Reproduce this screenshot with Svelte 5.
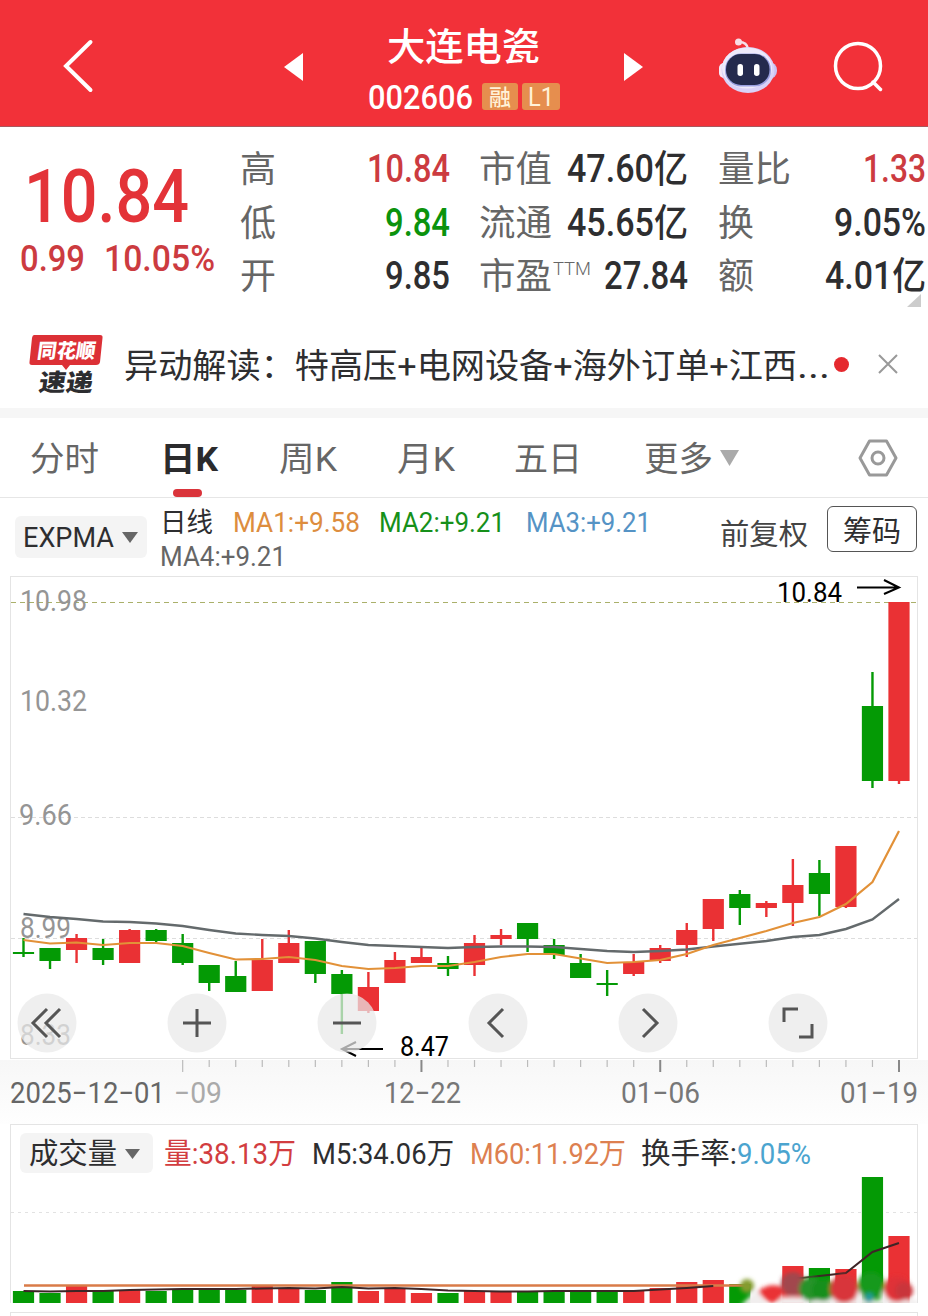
<script>
	const RED = '#ea3134';
	const GREEN = '#049a05';

	const stock = { name: '大连电瓷', code: '002606' };

	const tabs = [
		{ label: '分时', w: 69, gap: 30 },
		{ label: '日K', w: 58, gap: 61, active: true },
		{ label: '周K', w: 58, gap: 61 },
		{ label: '月K', w: 58, gap: 60 },
		{ label: '五日', w: 68, gap: 59 },
		{ label: '更多', w: 69, gap: 62 }
	];

	// [open/close top, bottom, high, low, rising, volume top]
	const days = [
		[952, 954, 938, 957, 0, 1291], [948, 961, 948, 969, 0, 1293], [938, 950, 934, 963, 1, 1286],
		[948, 960, 939, 965, 0, 1290], [930, 963, 929, 963, 1, 1290], [930, 941, 929, 942, 0, 1291],
		[943, 963, 934, 965, 0, 1290], [965, 983, 965, 991, 0, 1290], [976, 992, 961, 992, 0, 1290],
		[960, 991, 939, 991, 1, 1286], [943, 963, 930, 963, 1, 1289], [941, 974, 941, 983, 0, 1290],
		[974, 994, 970, 1034, 0, 1282], [987, 1011, 972, 1013, 1, 1291], [960, 983, 952, 983, 1, 1289],
		[957, 963, 948, 963, 1, 1293], [963, 969, 956, 976, 0, 1293], [943, 965, 935, 976, 1, 1291],
		[935, 939, 929, 945, 1, 1291], [923, 939, 923, 952, 0, 1291], [945, 955, 939, 959, 0, 1292],
		[963, 978, 954, 978, 0, 1290], [983, 985, 970, 996, 0, 1291], [962, 974, 954, 976, 1, 1291],
		[948, 961, 945, 963, 1, 1288], [930, 945, 923, 957, 1, 1282], [899, 929, 899, 941, 1, 1280],
		[894, 908, 890, 925, 0, 1284], [903, 908, 901, 917, 1, 1286], [885, 903, 859, 926, 1, 1266],
		[873, 894, 860, 916, 0, 1268], [846, 907, 846, 908, 1, 1269], [706, 781, 672, 788, 0, 1177],
		[602, 781, 602, 784, 1, 1236]
	];

	const slow = [914, 917, 919, 921.5, 922, 923.5, 926, 930, 933.5, 935, 936, 938.5, 942, 945, 946, 947, 948, 947, 946.5, 946.5, 947, 949, 951, 952, 951, 949.5, 946.5, 943.7, 941, 937, 935, 929, 919.5, 899];
	const fast = [940, 943.5, 942.5, 945, 943, 943, 946, 953, 959.5, 959, 957, 960, 966, 969, 968, 966, 966, 962, 957, 954, 954, 958.5, 963, 962, 960, 954, 945, 938, 931, 923, 917, 904, 882, 831];
	const volAvg = [1291, 1291.5, 1291, 1291, 1290, 1289.5, 1289, 1289, 1289, 1288.5, 1288, 1288.5, 1287, 1288.5, 1288, 1289, 1290.5, 1291, 1291.5, 1291.5, 1291, 1291, 1291, 1291, 1289.5, 1288, 1286, 1285, 1283, 1279, 1276, 1273, 1252, 1243];

	const px = (i) => 23.5 + i * 26.53;
	const line = (ys) => ys.map((y, i) => `${px(i)},${y}`).join(' ');

	const levels = [
		['10.98', 20, 611, 67], ['10.32', 20, 711, 67], ['9.66', 19, 825, 53],
		['8.99', 20, 938, 51], ['8.33', 20, 1045, 51]
	];

	const tools = [
		'M13 -14 L-1 0 L13 14 M0 -14 L-14 0 L0 14',
		'M-14 0 H14 M0 -14 V14',
		'M-14 0 H14',
		'M5 -14 L-9 0 L5 14',
		'M-5 -14 L9 0 L-5 14',
		'M-14 -1 V-14 H0 M14 1 V14 H1'
	];
</script>

<!-- one run of text stretched to a set width; its box ends on the baseline -->
{#snippet fit(text, w, size, cls = '')}
	<svg class="fit {cls}" width={w} height={Math.round(size * 0.71)}>
		<text x="0" y={Math.round(size * 0.71)} font-size={size} textLength={w} lengthAdjust="spacingAndGlyphs">{text}</text>
	</svg>
{/snippet}

{#snippet pair(label, lw, value, vw, tone = '', sup = '')}
	<div class="pair">
		<span class="key">{@render fit(label, lw, 36)}{#if sup}<span class="sup">{@render fit(sup, 38, 19)}</span>{/if}</span>
		{@render fit(value, vw, 38, 'med ' + tone)}
	</div>
{/snippet}

<div class="app">
	<header>
		<svg class="back" width="32" height="54" viewBox="0 0 32 54"><path d="M28.500 3 L4 27 L28.500 51" fill="none" stroke="#fff" stroke-width="4" stroke-linecap="round" /></svg>
		<svg class="prev" width="19" height="28"><path d="M19 0V28L0 14z" fill="#fff" /></svg>
		<div class="title">
			{@render fit(stock.name, 153, 38, 'name')}
			<div class="code">
				{@render fit(stock.code, 105, 34, 'med')}
				<span class="badge">{@render fit('融', 22, 22, 'med')}</span>
				<span class="badge last">{@render fit('L1', 26, 25)}</span>
			</div>
		</div>
		<svg width="19" height="28"><path d="M0 0V28L19 14z" fill="#fff" /></svg>
		<svg class="robot" width="60" height="56" viewBox="0 0 60 56">
			<path d="M21 4 Q29 4 30 11" fill="none" stroke="#f5dfe9" stroke-width="2.500" />
			<circle cx="20.500" cy="4" r="3.500" fill="#f8dce5" />
			<rect x="1" y="24" width="58" height="17" rx="8" fill="#c9c2f3" />
			<rect x="1" y="25" width="10" height="15" rx="5" fill="#f6e8f7" />
			<ellipse cx="30" cy="32" rx="26.500" ry="23" fill="#d9d2f8" />
			<ellipse cx="29" cy="30" rx="25" ry="20.500" fill="#eeeafb" />
			<rect x="7" y="15.500" width="46" height="33" rx="16" fill="#9aa0e0" />
			<rect x="8" y="16" width="43.500" height="31" rx="15" fill="#242a4d" />
			<rect x="19.500" y="26" width="5.500" height="12" rx="2.700" fill="#fff" />
			<rect x="36" y="26" width="5.500" height="12" rx="2.700" fill="#fff" />
		</svg>
		<svg class="search" width="51" height="52" viewBox="0 0 51 52"><g fill="none" stroke="#fff" stroke-width="3.500" stroke-linecap="round"><circle cx="25" cy="25" r="22.500" /><path d="M40 41 L47.500 48.500" /></g></svg>
	</header>

	<section class="quote">
		<div class="price">
			{@render fit('10.84', 165, 75, 'med up big')}
			<div class="change">
				{@render fit('0.99', 65, 37, 'med soft')}
				{@render fit('10.05%', 111, 37, 'med soft')}
			</div>
		</div>
		<div class="col c1">
			{@render pair('高', 36, '10.84', 83, 'soft')}
			{@render pair('低', 36, '9.84', 65, 'down')}
			{@render pair('开', 36, '9.85', 65)}
		</div>
		<div class="col c2">
			{@render pair('市值', 73, '47.60亿', 121)}
			{@render pair('流通', 73, '45.65亿', 121)}
			{@render pair('市盈', 73, '27.84', 84, '', 'TTM')}
		</div>
		<div class="col c3">
			{@render pair('量比', 73, '1.33', 63, 'soft')}
			{@render pair('换', 36, '9.05%', 92)}
			{@render pair('额', 36, '4.01亿', 101)}
		</div>
		<svg class="corner" width="14" height="13"><path d="M14 0V13H0z" fill="#ccc" /></svg>
	</section>

	<section class="news">
		<svg class="logo" width="75" height="62" viewBox="0 0 75 62">
			<path d="M5 1 H71 Q74 1 73.500 4 L71 28 Q70.500 31 67 31 H41 L37 36 L33 31 H3 Q0 31 .5 28 L3 4 Q3.500 1 5 1z" fill="#dc3036" />
			<g transform="skewX(-8)" font-weight="900">
				<text x="11" y="24" font-size="20" fill="#fff" textLength="58" lengthAdjust="spacingAndGlyphs">同花顺</text>
				<text x="17" y="57" font-size="24" fill="#2d2d30" textLength="54" lengthAdjust="spacingAndGlyphs">速递</text>
			</g>
		</svg>
		<div class="headline">{@render fit('异动解读：特高压+电网设备+海外订单+江西', 673, 34)}{@render fit('...', 33, 36)}</div>
		<i class="dot"></i>
		<svg class="close" width="22" height="22"><path d="M2 2L20 20M20 2L2 20" stroke="#999" stroke-width="2" /></svg>
	</section>

	<nav>
		{#each tabs as tab}
			<span class="tab" class:active={tab.active} style="margin-left: {tab.gap}px">{@render fit(tab.label, tab.w, 34)}</span>
		{/each}
		<svg class="more" width="19" height="16"><path d="M0 0H19L9.500 16z" fill="#aaa" /></svg>
		<svg class="gear" width="40" height="38" viewBox="0 0 40 38"><g fill="none" stroke="#999" stroke-width="3" stroke-linejoin="round"><path d="M11.500 2 H28.500 L38 19 L28.500 36 H11.500 L2 19z" /><circle cx="20" cy="19" r="6" /></g></svg>
	</nav>

	<section class="legend">
		<button class="pick exp">{@render fit('EXPMA', 91, 28)}<svg width="16" height="11"><path d="M0 0H16L8 11z" fill="#666" /></svg></button>
		<div class="mas">
			<div class="ma-row">
				{@render fit('日线', 53, 27)}
				<span class="m1">{@render fit('MA1:+9.58', 127, 28)}</span>
				<span class="m2">{@render fit('MA2:+9.21', 126, 28)}</span>
				<span class="m3">{@render fit('MA3:+9.21', 125, 28)}</span>
			</div>
			<div class="ma-row two">{@render fit('MA4:+9.21', 126, 28)}</div>
		</div>
		<span class="adjust">{@render fit('前复权', 88, 29)}</span>
		<button class="chips">{@render fit('筹码', 58, 29)}</button>
	</section>

	<section class="kline">
		<svg width="908" height="484" viewBox="10 576 908 484">
			<rect x="10.500" y="576.500" width="907" height="482" fill="#fff" stroke="#e4e4e4" />
			<path d="M11 817.500H917M11 938.500H917" stroke="#ddd" stroke-dasharray="4 3" />
			<path d="M11 602.500H917" stroke="#aab06a" stroke-dasharray="5 4" />
			{#each levels as [text, x, y, w]}
				<text {x} {y} font-size="29" fill="#959595" textLength={w} lengthAdjust="spacingAndGlyphs">{text}</text>
			{/each}
			{#each days as [top, bottom, high, low, up], i}
				<g fill={up ? RED : GREEN}>
					<rect x={px(i) - 1.2} y={high} width="2.400" height={low - high} />
					<rect x={px(i) - 10.6} y={top} width="21.200" height={bottom - top} />
				</g>
			{/each}
			<polyline points={line(slow)} fill="none" stroke="#646a6c" stroke-width="2.400" />
			<polyline points={line(fast)} fill="none" stroke="#e29138" stroke-width="2.200" />
			<text x="777" y="602" font-size="27" textLength="65" lengthAdjust="spacingAndGlyphs">10.84</text>
			<path d="M857 587.500H898M884 580L899 587.500L884 594M383 1049H343M356 1042L342 1049L356 1056" fill="none" stroke="#000" stroke-width="2" />
			<text x="400" y="1056" font-size="27" textLength="49" lengthAdjust="spacingAndGlyphs">8.47</text>
		</svg>
		<div class="tools">
			{#each tools as d}
				<svg width="60" height="60" viewBox="-30 -30 60 60"><circle r="29.500" fill="#e9e9e9" fill-opacity=".72" /><path {d} fill="none" stroke="#555" stroke-width="3" /></svg>
			{/each}
		</div>
	</section>

	<section class="axis">
		<svg width="908" height="14" viewBox="10 1060 908 14">
			{#each days as _, i}
				{#if i >= 6}
					<path d="M{px(i)} 1060V{(i - 6) % 9 ? 1067 : 1072}" stroke={i > 6 && i % 9 === 6 ? '#888' : '#bbb'} stroke-width={i > 6 && i % 9 === 6 ? 2 : 1.2} />
				{/if}
			{/each}
		</svg>
		<div class="dates">
			{@render fit('2025−12−01', 155, 29)}
			<span class="faded">{@render fit('−09', 48, 29)}</span>
			<span class="d2">{@render fit('12−22', 77, 29)}</span>
			<span class="d3">{@render fit('01−06', 79, 29)}</span>
			<span class="d4">{@render fit('01−19', 78, 29)}</span>
		</div>
	</section>

	<section class="volume">
		<div class="vol-head">
			<button class="pick">{@render fit('成交量', 88, 29)}<svg width="15" height="10"><path d="M0 0H15L7.500 10z" fill="#666" /></svg></button>
			<span class="v1">{@render fit('量:38.13万', 132, 29)}</span>
			<span class="v2">{@render fit('M5:34.06万', 142, 29)}</span>
			<span class="v3">{@render fit('M60:11.92万', 156, 29)}</span>
			<span class="v4">{@render fit('换手率:', 96, 29)}</span>
			<span class="v5">{@render fit('9.05%', 74, 29)}</span>
		</div>
		<svg width="906" height="130" viewBox="11 1173 906 130">
			<defs>
				<filter id="smear" x="-20%" y="-40%" width="140%" height="180%"><feGaussianBlur stdDeviation="2" /></filter>
			</defs>
			<path d="M11 1212.500H917" stroke="#e2e2e2" stroke-dasharray="3 4" />
			{#each days as day, i}
				{#if i !== 28}
					<rect x={px(i) - 10.6} y={day[5]} width="21.200" height={1303 - day[5]} fill={day[4] ? RED : GREEN} />
				{/if}
			{/each}
			<path d="M24 1285.500H748" stroke="#d97b48" stroke-width="2.600" />
			<polyline points={line(volAvg.slice(0, 27))} fill="none" stroke="#3d2526" stroke-width="2" />
			<polyline points={volAvg.slice(29).map((y, i) => `${px(i + 29)},${y}`).join(' ')} fill="none" stroke="#3d2526" stroke-width="2" />
			<g filter="url(#smear)">
				<path d="M740 1306L757 1290L768 1306zM776 1306L780 1297H808V1306zM808 1306L810 1300H918V1306z" fill="#f1eeee" />
				<path d="M826 1306L832 1292L840 1306zM852 1306L859 1288L866 1306zM877 1306L884 1288L893 1306z" fill="#f1eeee" />
				<circle cx="747" cy="1286" r="7" fill="#849b2d" />
				<path d="M758 1291Q773 1280 787 1290Q780 1302 772 1303Q764 1301 758 1291z" fill={RED} />
				<circle cx="793" cy="1284" r="12" fill="#a2474d" />
				<circle cx="811" cy="1289" r="12" fill="#279329" />
				<circle cx="823" cy="1290" r="11" fill="#168f1c" />
				<circle cx="844" cy="1289" r="14" fill="#d8343b" />
				<circle cx="871" cy="1285" r="13" fill="#16991b" />
				<circle cx="869" cy="1298" r="5" fill="#249b9b" />
				<circle cx="897" cy="1289" r="13" fill="#df3037" />
				<circle cx="904" cy="1291" r="9" fill="#c9353b" />
			</g>
		</svg>
	</section>
	<div class="next"></div>
</div>

<style>
	:global(body) { margin: 0; background: #fff; }
	.app {
		width: 928px;
		height: 1316px;
		overflow: hidden;
		background: #fff;
		color: #2e2e30;
		font-family: Roboto, 'Noto Sans CJK SC', sans-serif;
	}
	svg { display: block; flex: none; }
	text { white-space: pre; }
	.fit { overflow: visible; fill: currentColor; }
	.med { font-weight: 500; }
	.up { color: #e33338; }
	.soft { color: #cc3b40; }
	.down { color: #0b930d; }
	button {
		border: 0;
		padding: 0;
		font: inherit;
		color: inherit;
		display: flex;
		align-items: center;
		flex: none;
		box-sizing: border-box;
	}

	header {
		height: 127px;
		box-sizing: border-box;
		padding: 7px 0 0 62px;
		border-bottom: 1px solid #a8585e;
		background: #f23139;
		color: #fff;
		display: flex;
		align-items: center;
	}
	.back { margin-top: -2px; }
	.prev { margin-left: 190px; }
	.title {
		width: 321px;
		height: 119px;
		box-sizing: border-box;
		padding: 26px 0 0 65px;
	}
	.title .name { margin-left: 19px; font-weight: 500; }
	.code { display: flex; align-items: center; margin-top: 23px; }
	.badge {
		width: 36px;
		height: 27px;
		margin-left: 9px;
		border-radius: 3px;
		background: #e68e4e;
		color: #fff2d8;
		display: flex;
		align-items: center;
		justify-content: center;
	}
	.badge.last { width: 38px; margin-left: 4px; }
	.robot { margin: -2px 0 0 75px; }
	.search { margin-left: 55px; }

	.quote {
		height: 193px;
		display: flex;
		position: relative;
	}
	.price { width: 240px; padding: 42px 0 0 20px; box-sizing: border-box; }
	.big { margin-left: 4px; }
	.change { display: flex; gap: 19px; margin-top: 23px; }
	.col {
		padding-top: 28px;
		display: flex;
		flex-direction: column;
		gap: 26.700px;
	}
	.c1 { width: 210px; }
	.c2 { width: 209px; margin-left: 29px; }
	.c3 { width: 208px; margin-left: 30px; }
	.pair { display: flex; justify-content: space-between; align-items: flex-end; }
	.key { display: flex; color: #666; }
	.sup { font-weight: 300; margin: -1px 0 0 1px; }
	.corner { position: absolute; left: 907px; top: 167px; }

	.news {
		height: 88px;
		border-bottom: 10px solid #f6f6f6;
		display: flex;
		align-items: center;
		padding-left: 29px;
	}
	.logo { margin-top: 1px; font-family: 'Noto Sans CJK SC', sans-serif; }
	.headline { display: flex; align-items: flex-end; margin: 2px 0 0 20px; height: 26px; }
	.dot { width: 15px; height: 15px; border-radius: 50%; background: #e5292e; margin-left: 4px; }
	.close { margin-left: 28px; }

	nav {
		height: 79px;
		border-bottom: 1px solid #e6e6e6;
		display: flex;
		align-items: center;
		color: #666;
	}
	.tab { height: 79px; display: flex; align-items: center; position: relative; padding-top: 2px; box-sizing: border-box; }
	.active { font-weight: 700; color: #2b2b2d; }
	.active::after {
		content: '';
		position: absolute;
		left: 13px;
		bottom: 0;
		width: 29px;
		height: 8px;
		border-radius: 4px;
		background: #da343b;
	}
	.more { margin-left: 7px; }
	.gear { margin-left: 119px; }

	.legend { height: 78px; display: flex; align-items: flex-start; }
	.pick { background: #f4f4f4; border-radius: 6px; gap: 8px; }
	.exp { width: 132px; height: 42px; margin: 18px 0 0 15px; padding-left: 8px; }
	.mas { width: 561px; padding: 14px 0 0 13px; box-sizing: border-box; }
	.ma-row { display: flex; align-items: flex-end; }
	.ma-row.two { margin-top: 14px; color: #666; }
	.m1 { color: #dd8d3e; margin-left: 20px; }
	.m2 { color: #16901a; margin-left: 19px; }
	.m3 { color: #5593c5; margin-left: 21px; }
	.adjust { margin: 26px 0 0 12px; color: #444; }
	.chips {
		width: 90px;
		height: 46px;
		margin: 8px 0 0 19px;
		padding-top: 4px;
		border: 1.500px solid #555;
		border-radius: 6px;
		background: #fff;
		justify-content: center;
	}

	.kline { height: 484px; margin-left: 10px; position: relative; }
	.tools {
		position: absolute;
		left: 7px;
		top: 417px;
		width: 811px;
		display: flex;
		justify-content: space-between;
	}

	.axis {
		height: 64px;
		padding-left: 10px;
		background: linear-gradient(#f7f7f7, #fefefe);
	}
	.dates { display: flex; padding-top: 8px; color: #666; }
	.faded { color: #aaa; margin-left: 9px; }
	.d2 { margin-left: 162px; color: #777; }
	.d3 { margin-left: 160px; color: #777; }
	.d4 { margin-left: 140px; color: #777; }

	.volume {
		width: 906px;
		height: 178px;
		margin-left: 10px;
		border: 1px solid #e4e4e4;
		border-bottom: 0;
	}
	.vol-head { height: 48px; display: flex; align-items: center; padding: 8px 0 0 9px; box-sizing: border-box; }
	.vol-head span { padding-top: 1px; }
	.vol-head .pick { width: 133px; height: 40px; padding: 1px 0 0 9px; }
	.v1 { margin-left: 11px; color: #d23d40; }
	.v2 { margin-left: 16px; }
	.v3 { margin-left: 16px; color: #dd8050; }
	.v4 { margin-left: 15px; }
	.v5 { color: #4ba4cf; }
	.next { width: 906px; height: 20px; margin: 9px 0 0 10px; border: 1px solid #e4e4e4; }
</style>
